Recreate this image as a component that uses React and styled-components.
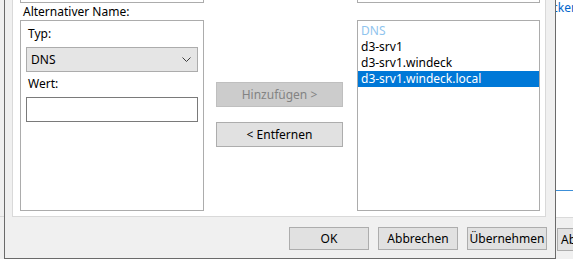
import React from "react";
import styled, { createGlobalStyle } from "styled-components";

const GlobalStyle = createGlobalStyle`
  html, body {
    margin: 0;
    padding: 0;
    background: #ffffff;
  }
  body {
    font-family: "Segoe UI", "Noto Sans", sans-serif;
    font-size: 12px;
    color: #000000;
  }
`;

const Desktop = styled.div`
  display: flex;
  align-items: flex-start;
  width: 573px;
  height: 274px;
  overflow: hidden;
`;

const BackWindowLeft = styled.div`
  width: 4px;
  height: 259px;
  flex-shrink: 0;
  background: #f0f0f0;

  div {
    height: 216px;
    border-bottom: 1px solid #d9d9d9;
  }
`;

const Dialog = styled.div`
  box-sizing: border-box;
  width: 552px;
  height: 259px;
  flex-shrink: 0;
  display: flex;
  flex-direction: column;
  background: #f0f0f0;
  border: 1px solid #6a6a6a;
  border-top: none;
`;

const TabPage = styled.div`
  box-sizing: border-box;
  height: 217px;
  margin: 0 9px 0 7px;
  padding: 0 5px 5px 7px;
  background: #ffffff;
  border: 1px solid #d9d9d9;
  border-top: none;
  display: flex;
  flex-direction: column;
`;

const TopStrip = styled.div`
  height: 3px;
  display: flex;
  justify-content: space-between;
`;

const CutBox = styled.div`
  box-sizing: border-box;
  width: ${({ w }) => w}px;
  border: 1px solid #acacac;
  border-top: none;
`;

const Body = styled.div`
  flex: 1;
  display: flex;
  gap: 12px;
`;

const LeftColumn = styled.div`
  width: 184px;
  display: flex;
  flex-direction: column;
`;

const SectionLabel = styled.div`
  height: 17px;
  box-sizing: border-box;
  line-height: 16px;
  padding: 1px 0 0 3px;
  white-space: nowrap;
`;

const GroupBox = styled.div`
  flex: 1;
  box-sizing: border-box;
  border: 1px solid #acacac;
  padding: 5px 5px 0 5px;
  display: flex;
  flex-direction: column;
`;

const FieldLabel = styled.div`
  line-height: 16px;
  padding-left: 2px;
  margin-bottom: 5px;
`;

const Combo = styled.div`
  box-sizing: border-box;
  height: 25px;
  display: flex;
  align-items: center;
  justify-content: space-between;
  padding: 0 6px 0 4px;
  background: #e5e5e5;
  border: 1px solid #acacac;
  margin-bottom: 4px;
`;

const TextInput = styled.div`
  box-sizing: border-box;
  height: 25px;
  background: #ffffff;
  border: 1px solid #7a7a7a;
`;

const MiddleColumn = styled.div`
  width: 127px;
  display: flex;
  flex-direction: column;
  gap: 15px;
  padding-top: 79px;
`;

const Button = styled.div`
  box-sizing: border-box;
  width: ${({ w }) => w || 80}px;
  height: ${({ h }) => h || 23}px;
  display: flex;
  align-items: center;
  justify-content: ${({ left }) => (left ? "flex-start" : "center")};
  padding-left: ${({ left }) => (left ? "3px" : "0")};
  background: ${({ disabled }) => (disabled ? "#cccccc" : "#e1e1e1")};
  border: 1px solid ${({ disabled }) => (disabled ? "#bfbfbf" : "#adadad")};
  color: ${({ disabled }) => (disabled ? "#838383" : "#000000")};
  white-space: nowrap;
  overflow: hidden;
  flex-shrink: 0;
`;

const ListBox = styled.div`
  width: 183px;
  margin: 17px 0 0 2px;
  box-sizing: border-box;
  border: 1px solid #acacac;
  padding-top: 2px;
  display: flex;
  flex-direction: column;
`;

const ListItem = styled.div`
  height: 16px;
  line-height: 16px;
  padding-left: 3px;
  white-space: nowrap;
  background: ${({ selected }) => (selected ? "#0078d7" : "transparent")};
  color: ${({ selected, header }) =>
    selected ? "#ffffff" : header ? "#8fc4ee" : "#000000"};
`;

const ButtonBar = styled.div`
  display: flex;
  justify-content: flex-end;
  gap: 9px;
  padding: 10px 8px 0 0;
`;

const BackWindowRight = styled.div`
  flex: 1;
  height: 259px;
  overflow: hidden;
  display: flex;
  flex-direction: column;
  background: #ffffff;
`;

const LinkText = styled.div`
  height: 190px;
  line-height: 16px;
  color: #0066cc;
  margin-left: -4px;
  white-space: nowrap;
  border-bottom: 1px solid #3c8fd8;
`;

const RightGap = styled.div`
  height: 26px;
  border-bottom: 1px solid #dadada;
`;

const RightBar = styled.div`
  flex: 1;
  background: #f0f0f0;
  padding: 10px 0 0 1px;
`;

const Chevron = () => (
  <svg width="9" height="5" viewBox="0 0 9 5">
    <path d="M0.5 0.5 L4.5 4.5 L8.5 0.5" fill="none" stroke="#3c3c3c" strokeWidth="1" />
  </svg>
);

export default function App() {
  return (
    <>
      <GlobalStyle />
      <Desktop>
        <BackWindowLeft>
          <div />
        </BackWindowLeft>
        <Dialog>
          <TabPage>
            <TopStrip>
              <CutBox w={184} />
              <CutBox w={183} />
            </TopStrip>
            <Body>
              <LeftColumn>
                <SectionLabel>Alternativer Name:</SectionLabel>
                <GroupBox>
                  <FieldLabel>Typ:</FieldLabel>
                  <Combo>
                    <span>DNS</span>
                    <Chevron />
                  </Combo>
                  <FieldLabel>Wert:</FieldLabel>
                  <TextInput />
                </GroupBox>
              </LeftColumn>
              <MiddleColumn>
                <Button w={127} h={25} disabled>
                  Hinzufügen &gt;
                </Button>
                <Button w={127} h={25}>
                  &lt; Entfernen
                </Button>
              </MiddleColumn>
              <ListBox>
                <ListItem header>DNS</ListItem>
                <ListItem>d3-srv1</ListItem>
                <ListItem>d3-srv1.windeck</ListItem>
                <ListItem selected>d3-srv1.windeck.local</ListItem>
              </ListBox>
            </Body>
          </TabPage>
          <ButtonBar>
            <Button>OK</Button>
            <Button>Abbrechen</Button>
            <Button>Übernehmen</Button>
          </ButtonBar>
        </Dialog>
        <BackWindowRight>
          <LinkText>cken</LinkText>
          <RightGap />
          <RightBar>
            <Button left>Abbrechen</Button>
          </RightBar>
        </BackWindowRight>
      </Desktop>
    </>
  );
}
